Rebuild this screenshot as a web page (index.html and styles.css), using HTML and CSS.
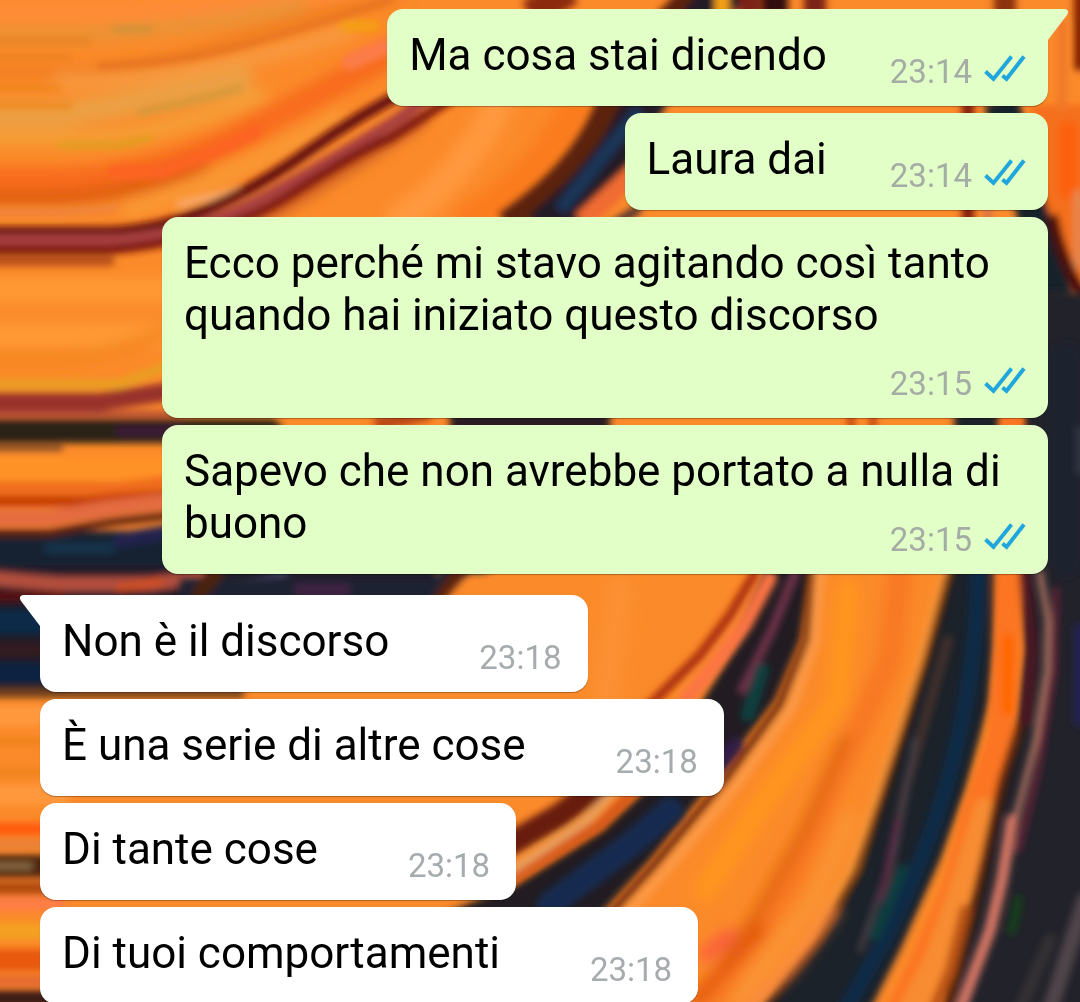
FILE: index.html
```
<!DOCTYPE html>
<html lang="it">
<head>
<meta charset="utf-8">
<meta name="viewport" content="width=device-width, initial-scale=1">
<title>Chat</title>
<link rel="stylesheet" href="styles.css">
</head>
<body>
<svg class="wallpaper" viewBox="0 0 1080 1002" preserveAspectRatio="xMidYMid slice" aria-hidden="true">
  <defs>
    <filter id="soft" filterUnits="userSpaceOnUse" x="-60" y="-60" width="1200" height="1122"><feGaussianBlur stdDeviation="3.500"/></filter>
    <filter id="wide" filterUnits="userSpaceOnUse" x="-60" y="-60" width="1200" height="1122"><feGaussianBlur stdDeviation="7"/></filter>
    <symbol id="ticks" viewBox="0 0 42 28">
      <path d="M1.500 17.500 9.500 25 27.500 2.500M18.500 21.500 22.500 25 40 2.500" fill="none" stroke="#1fa6dd" stroke-width="3.900"/>
    </symbol>
  </defs>
  <rect width="1080" height="1002" fill="#fb8a2a"/>

  <!-- broad strokes of the upper left -->
  <g filter="url(#wide)" fill="none" stroke-linecap="round">
    <path d="M-20 12H120Q260 5 400-20" stroke="#ff8c38" stroke-width="20"/>
    <path d="M-20 34H90Q200 28 300 5" stroke="#e89438" stroke-width="14"/>
    <path d="M-20 72H60Q140 72 220 45T400-5" stroke="#ee7a1e" stroke-width="10"/>
    <path d="M60 82Q200 80 350 30" stroke="#f89a40" stroke-width="16"/>
    <path d="M-20 115H60Q180 95 240 80" stroke="#eca044" stroke-width="26"/>
    <path d="M-20 138H80Q160 138 260 95" stroke="#f4a43a" stroke-width="12"/>
    <path d="M-20 180H60Q160 178 250 130T400 50" stroke="#f86c1c" stroke-width="26"/>
    <path d="M-20 198H50Q120 198 200 165" stroke="#dc5c08" stroke-width="14"/>
    <path d="M130 210Q230 180 340 118" stroke="#fa9a34" stroke-width="16"/>
    <path d="M230 235Q330 180 420 120" stroke="#c85a20" stroke-width="14"/>
    <path d="M-20 290H180M-20 335H180" stroke="#ff9a36" stroke-width="24"/>
    <path d="M-20 358H70Q110 355 170 330" stroke="#f4861c" stroke-width="12"/>
    <path d="M400 220Q470 170 500 100" stroke="#ff983c" stroke-width="30"/>
    <path d="M470 220Q540 180 580 100" stroke="#fb7c1c" stroke-width="34"/>
  </g>
  <g filter="url(#soft)" fill="none" stroke-linecap="round">
    <path d="M-20 41H90M-20 57H70" stroke="#e27c1c" stroke-width="4"/>
    <path d="M-20 88H60M-20 106H70" stroke="#ec841c" stroke-width="5"/>
    <path d="M100 66Q180 62 240 46T390 0" stroke="#e4701c" stroke-width="6"/>
    <path d="M140 112Q200 100 240 88" stroke="#d09838" stroke-width="6"/>
    <path d="M115 29H150" stroke="#c89038" stroke-width="5"/>
    <path d="M60 145H120L150 138" stroke="#d8a018" stroke-width="5"/>
    <path d="M345 26H375" stroke="#f4a008" stroke-width="9"/>
    <path d="M350 62 390 45" stroke="#fc7c48" stroke-width="16"/>
    <path d="M115 172H160Q210 155 255 132" stroke="#fc6424" stroke-width="14"/>
    <path d="M-20 212H60L115 208" stroke="#ee8440" stroke-width="7"/>
    <path d="M180 204 240 190" stroke="#f8a868" stroke-width="8"/>
    <path d="M-20 232H110Q160 230 210 208T310 150 420 84" stroke="#641008" stroke-width="11"/>
    <path d="M-20 240H120Q200 232 260 200T400 118L450 80" stroke="#a84040" stroke-width="12"/>
    <path d="M-20 250H110Q220 240 290 195T390 138L450 100" stroke="#7c1808" stroke-width="9"/>
    <path d="M-20 261H110" stroke="#b8501c" stroke-width="10"/>
    <path d="M-20 384H120L170 365" stroke="#e8a020" stroke-width="9"/>
    <path d="M-20 402H100L180 390" stroke="#98302c" stroke-width="18"/>
    <path d="M-20 414H180" stroke="#b44c38" stroke-width="6"/>
    <path d="M-20 431H270" stroke="#2a2014" stroke-width="24"/>
    <path d="M120 431H180" stroke="#3c1c38" stroke-width="10"/>
    <path d="M-20 448H60" stroke="#8a5028" stroke-width="7"/>
    <path d="M-20 468H180" stroke="#ff9228" stroke-width="24"/>
    <path d="M-20 488H120L180 480" stroke="#f06c1c" stroke-width="12"/>
    <path d="M-20 501H90L180 494" stroke="#c43a04" stroke-width="11"/>
    <path d="M-20 552H480" stroke="#182430" stroke-width="42"/>
    <path d="M-20 518H50L110 508 180 500" stroke="#e46c40" stroke-width="16"/>
    <path d="M-20 533H50L110 522 180 514" stroke="#5c2010" stroke-width="8"/>
    <path d="M50 548H110" stroke="#123048" stroke-width="12"/>
    <path d="M120 540 180 530" stroke="#202450" stroke-width="14"/>
    <path d="M-20 584H420" stroke="#241c2c" stroke-width="38"/>
    <path d="M-20 577Q30 582 60 584H150L200 577" stroke="#b4503c" stroke-width="14"/>
    <path d="M120 588 160 582" stroke="#d05024" stroke-width="8"/>
    <path d="M-20 644H50" stroke="#1c1c28" stroke-width="96"/>
    <path d="M-20 596H60" stroke="#5c1010" stroke-width="9"/>
    <path d="M235 590Q260 582 285 576" stroke="#504870" stroke-width="5"/>
    <path d="M-20 622H60" stroke="#0c2a48" stroke-width="24"/>
    <path d="M-20 650H60" stroke="#301c20" stroke-width="16"/>
    <path d="M-20 673H60" stroke="#102040" stroke-width="22"/>
    <path d="M-20 693H240" stroke="#70401c" stroke-width="10"/>
    <path d="M-20 716H60M-20 795H60" stroke="#ff983c" stroke-width="20"/>
    <path d="M-20 742H60M-20 772H60" stroke="#f0841c" stroke-width="9"/>
    <path d="M-20 829H60" stroke="#ff5c10" stroke-width="13"/>
    <path d="M-20 844H60" stroke="#e88038" stroke-width="9"/>
    <path d="M-20 866H60" stroke="#50280c" stroke-width="23"/>
    <path d="M-20 866H30" stroke="#907048" stroke-width="6"/>
    <path d="M-20 888H60" stroke="#b04810" stroke-width="13"/>
    <path d="M-20 904H60" stroke="#ff7c48" stroke-width="12"/>
    <path d="M-20 931H60" stroke="#f4a024" stroke-width="16"/>
    <path d="M-20 960H60" stroke="#e85808" stroke-width="22"/>
    <path d="M-20 981H60" stroke="#e46830" stroke-width="10"/>
    <path d="M-20 999H60" stroke="#3c1c14" stroke-width="18"/>
  </g>

  <!-- dark swirl from the top to the middle -->
  <g filter="url(#soft)" fill="none">
    <path d="M720-20Q640 50 612 115T510 230" stroke="#5c2008" stroke-width="40"/>
    <path d="M735-20Q665 60 635 120T542 230" stroke="#241c28" stroke-width="40"/>
    <path d="M640 110 600 160 560 210" stroke="#1c3458" stroke-width="14"/>
    <path d="M650 158 582 222" stroke="#f06c30" stroke-width="20"/>
    <path d="M640 208 605 230" stroke="#503030" stroke-width="9"/>
    <path d="M570-10 530 15" stroke="#8c2c0c" stroke-width="30"/>
    <path d="M722-10V15" stroke="#f4a018" stroke-width="15"/>
    <path d="M750-10V15M815-10V15" stroke="#7c2018" stroke-width="22"/>
    <path d="M775-10V15" stroke="#301010" stroke-width="26"/>
    <path d="M1005-10V15" stroke="#8c3008" stroke-width="22"/>
    <path d="M968 100V225" stroke="#801c0c" stroke-width="12"/>
    <path d="M1000 100Q1025 170 1055 300" stroke="#18202c" stroke-width="34"/>
    <path d="M988 205V225" stroke="#d06c50" stroke-width="6"/>
    <path d="M1030 105H1100V294Q1070 280 1045 200Z" fill="#f4701c"/>
    <path d="M1062 20V110" stroke="#f0782c" stroke-width="10"/>
    <path d="M1081-20V70" stroke="#802000" stroke-width="14"/>
    <path d="M1068 130V190" stroke="#fc600c" stroke-width="18" stroke-linecap="round"/>
    <path d="M1078 190V270" stroke="#e48850" stroke-width="9"/>
    <path d="M1052 215Q1060 260 1085 300" stroke="#4c1008" stroke-width="12"/>
    <path d="M450 421H610" stroke="#2c1c24" stroke-width="30"/>
    <path d="M375 425 430 412" stroke="#bc4818" stroke-width="16"/>
    <path d="M851 400V440M873 400V440" stroke="#b83808" stroke-width="6"/>
    <path d="M180 590H438L465 560" stroke="#1c2430" stroke-width="22"/>
    <path d="M438 600 462 568" stroke="#5c2410" stroke-width="12"/>
    <path d="M195 598 220 570" stroke="#4c2010" stroke-width="14"/>
    <path d="M295 590H350" stroke="#402444" stroke-width="12"/>
  </g>

  <!-- night side on the right -->
  <g filter="url(#soft)">
    <path d="M955 400H1003Q1008 500 1000 573L990 700 965 790 940 860 900 950 860 1030H740L780 985 820 940 860 870 880 800 905 720 925 660 950 573Z" fill="#1c202c"/>
    <path d="M1020 300Q1030 280 1100 298V1030H940L970 920 995 800 1015 740 1026 650 1022 573Z" fill="#20202c"/>
  </g>
  <g filter="url(#soft)" fill="none" stroke-linecap="round">
    <path d="M978 573Q978 650 958 740T890 930L840 1020" stroke="#102a46" stroke-width="16"/>
    <path d="M948 640 905 790 885 890" stroke="#44302c" stroke-width="9"/>
    <path d="M915 740 895 850 860 950" stroke="#484048" stroke-width="5"/>
    <path d="M898 820 880 900" stroke="#602848" stroke-width="5"/>
    <path d="M902 870 875 935" stroke="#083c40" stroke-width="12"/>
    <path d="M944 573 920 660 898 730 875 800 850 870 810 935 750 1010" stroke="#f89438" stroke-width="8"/>
    <path d="M950 573 927 660 905 730 882 800 857 872 818 942 758 1016" stroke="#4c200c" stroke-width="7"/>
    <path d="M1012 400 1007 573V650L1000 740 975 815 955 890 920 970 890 1030" stroke="#fb7424" stroke-width="27"/>
    <path d="M1008 640V710" stroke="#ff6804" stroke-width="12"/>
    <path d="M985 810 964 880 936 960 900 1030" stroke="#f88c30" stroke-width="24"/>
    <path d="M1022 720 1003 780 985 860 968 930 945 1020" stroke="#4c1c08" stroke-width="9"/>
    <path d="M965 910 950 970 930 1020" stroke="#bc5418" stroke-width="11"/>
    <path d="M1025 573 1032 650 1026 720" stroke="#4c1424" stroke-width="12"/>
    <path d="M1040 573 1048 620 1047 670 1036 740 1015 820" stroke="#b07464" stroke-width="6"/>
    <path d="M1056 590 1054 670 1038 770 1018 850" stroke="#682438" stroke-width="6"/>
    <path d="M1012 820 1002 880 990 930 960 1010" stroke="#d07464" stroke-width="12"/>
    <path d="M1018 900 1012 930" stroke="#183c1c" stroke-width="10"/>
    <path d="M1080 630V720" stroke="#202050" stroke-width="14"/>
    <path d="M1085 900 1050 1010" stroke="#504448" stroke-width="16"/>
    <path d="M1020 1010 1050 940" stroke="#343034" stroke-width="12"/>
    <path d="M1066 360V560" stroke="#1c202e" stroke-width="34"/>
    <path d="M1080 430V470" stroke="#303440" stroke-width="9"/>
  </g>

  <!-- inner swirl and the orange band beside it -->
  <g filter="url(#soft)">
    <path d="M770 560H812L800 640 775 700 722 770 690 810 650 860 600 915H440L515 885 600 830 650 785 700 705 738 640Z" fill="#201c24"/>
  </g>
  <g filter="url(#soft)" fill="none" stroke-linecap="round">
    <path d="M795 573 772 630 742 690" stroke="#703048" stroke-width="9"/>
    <path d="M762 670 748 715" stroke="#0c4040" stroke-width="14"/>
    <path d="M735 745 715 770" stroke="#301c48" stroke-width="14"/>
    <path d="M670 810 630 845 550 905" stroke="#142c50" stroke-width="26"/>
    <path d="M755 573 730 615 700 655 650 705" stroke="#a82c08" stroke-width="9"/>
    <path d="M770 578 745 625 715 665 685 700" stroke="#fc7444" stroke-width="14"/>
    <path d="M600 785 560 815 500 850" stroke="#681c0c" stroke-width="24"/>
    <path d="M640 785 600 825 510 880" stroke="#d85818" stroke-width="12"/>
    <path d="M618 785 585 822 510 872" stroke="#e8a060" stroke-width="8"/>
    <path d="M812 560 806 640 780 705 727 778 655 865 610 915" stroke="#601c08" stroke-width="7"/>
    <path d="M821 560 815 640 791 708 736 785 666 870 621 920" stroke="#fc9844" stroke-width="11"/>
  </g>
  <g filter="url(#wide)" fill="none" stroke-linecap="round">
    <path d="M848 590 838 700 765 800 705 890" stroke="#ff961e" stroke-width="22"/>
    <path d="M900 570 890 660 830 790 790 880 710 1000" stroke="#f87820" stroke-width="24"/>
    <path d="M845 740 805 830 760 910 700 1000" stroke="#e0640c" stroke-width="11"/>
    <path d="M850 820 815 900 740 1000" stroke="#fa9434" stroke-width="16"/>
    <path d="M835 910 790 970 745 1010" stroke="#fa8440" stroke-width="9"/>
    <path d="M695 1000 760 930" stroke="#e45808" stroke-width="13"/>
    <path d="M705 955 730 935" stroke="#fc5840" stroke-width="12"/>
    <path d="M620 590 600 740" stroke="#fc9030" stroke-width="30"/>
  </g>
</svg>

<main class="chat">
  <ol class="group group--out">
    <li class="bubble bubble--tail"><svg class="tail" viewBox="0 0 20 34" aria-hidden="true"><path d="M0 0H17Q22 1 19 6L0 31Z"/></svg><span class="text">Ma cosa stai dicendo</span><span class="meta"><time>23:14</time><svg class="ticks" role="img" aria-label="Letto"><use href="#ticks"/></svg></span></li>
    <li class="bubble"><span class="text">Laura dai</span><span class="meta"><time>23:14</time><svg class="ticks" role="img" aria-label="Letto"><use href="#ticks"/></svg></span></li>
    <li class="bubble"><span class="text">Ecco perché mi stavo agitando così tanto quando hai iniziato questo discorso</span><span class="meta"><time>23:15</time><svg class="ticks" role="img" aria-label="Letto"><use href="#ticks"/></svg></span></li>
    <li class="bubble"><span class="text">Sapevo che non avrebbe portato a nulla di buono</span><span class="meta"><time>23:15</time><svg class="ticks" role="img" aria-label="Letto"><use href="#ticks"/></svg></span></li>
  </ol>
  <ol class="group group--in">
    <li class="bubble bubble--tail"><svg class="tail" viewBox="0 0 20 34" aria-hidden="true"><path d="M20 0H3Q-2 1 1 6L20 31Z"/></svg><span class="text">Non è il discorso</span><span class="meta"><time>23:18</time></span></li>
    <li class="bubble"><span class="text">È una serie di altre cose</span><span class="meta"><time>23:18</time></span></li>
    <li class="bubble"><span class="text">Di tante cose</span><span class="meta"><time>23:18</time></span></li>
    <li class="bubble"><span class="text">Di tuoi comportamenti</span><span class="meta"><time>23:18</time></span></li>
  </ol>
</main>
</body>
</html>
```
FILE: styles.css
```
* {
  box-sizing: border-box;
}

body {
  margin: 0;
  background: #fb8a2a;
  color: #000;
  font-family: Roboto, "Noto Sans", sans-serif;
  overflow-x: hidden;
}

/* The wallpaper stays put behind the conversation. */
.wallpaper {
  position: fixed;
  inset: 0;
  z-index: -1;
  width: 100%;
  height: 100%;
}

.chat {
  display: flex;
  flex-direction: column;
  gap: 21px;
  padding: 9px 32px 0 40px;
}

.group {
  display: flex;
  flex-direction: column;
  gap: 7px;
  margin: 0;
  padding: 0;
  list-style: none;
}

.group--out {
  --bubble: #e1ffc7;
  align-items: flex-end;
}

.group--in {
  --bubble: #fff;
  align-items: flex-start;
}

.bubble {
  position: relative;
  display: flow-root;
  max-width: calc(100% - 122px);
  padding: 20px 22px 14px 22px;
  border-radius: 16px;
  background: var(--bubble);
  box-shadow: 0 1px 1px rgba(0, 0, 0, 0.3);
}

.group--out .bubble--tail {
  border-top-right-radius: 0;
}

.group--in .bubble--tail {
  border-top-left-radius: 0;
}

.tail {
  position: absolute;
  top: 0;
  width: 20px;
  height: 34px;
  fill: var(--bubble);
}

.group--out .tail {
  left: 100%;
}

.group--in .tail {
  right: 100%;
}

.text {
  font-size: 44px;
  line-height: 52px;
}

.meta {
  float: right;
  display: flex;
  align-items: center;
  gap: 12px;
  margin: 23px 0 0 63px;
  color: #a5aca5;
  font-size: 33px;
  line-height: 40px;
}

.group--in .meta {
  margin-left: 90px;
  padding-right: 4px;
  color: #a6abae;
}

.ticks {
  width: 42px;
  height: 28px;
  margin-bottom: 8px;
}
```
